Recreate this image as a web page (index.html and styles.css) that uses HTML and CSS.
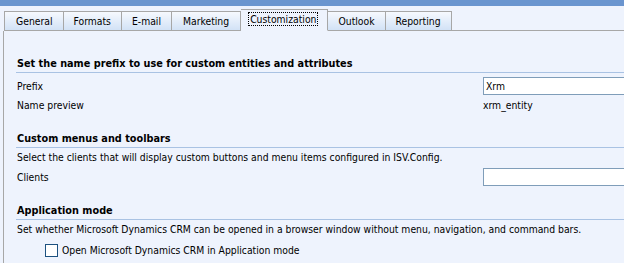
FILE: index.html
```html
<!DOCTYPE html>
<html>
<head>
<meta charset="utf-8">
<link rel="stylesheet" href="styles.css">
</head>
<body>
<div class="page">
<div class="topbar"></div>
<div class="tabs">
  <div class="tab first">General</div>
  <div class="tab">Formats</div>
  <div class="tab">E-mail</div>
  <div class="tab wide">Marketing</div>
  <div class="tab active"><span class="focus">Customization</span></div>
  <div class="tab">Outlook</div>
  <div class="tab">Reporting</div>
  <div class="tabfill"></div>
</div>
<div class="panel">
  <div class="section first">
    <div class="heading">Set the name prefix to use for custom entities and attributes</div>
    <div class="row">
      <div class="label">Prefix</div>
      <div class="field"><div class="input">Xrm</div></div>
    </div>
    <div class="row tight">
      <div class="label">Name preview</div>
      <div class="field value">xrm_entity</div>
    </div>
  </div>
  <div class="section">
    <div class="heading">Custom menus and toolbars</div>
    <div class="desc">Select the clients that will display custom buttons and menu items configured in ISV.Config.</div>
    <div class="row">
      <div class="label">Clients</div>
      <div class="field"><div class="input"></div></div>
    </div>
  </div>
  <div class="section">
    <div class="heading">Application mode</div>
    <div class="desc">Set whether Microsoft Dynamics CRM can be opened in a browser window without menu, navigation, and command bars.</div>
    <div class="check"><span class="box"></span>Open Microsoft Dynamics CRM in Application mode</div>
  </div>
</div>
</div>
</body>
</html>
```

FILE: styles.css
```css
html, body {
  margin: 0;
  padding: 0;
  background: #eef3fd;
  font-family: "DejaVu Sans Condensed", "DejaVu Sans", Tahoma, sans-serif;
  font-size: 10.3px;
  color: #000;
}
.page {
  display: flex;
  flex-direction: column;
  height: 263px;
  overflow: hidden;
}
.topbar {
  height: 6px;
  flex: none;
  background: #6a95cf;
}
.tabs {
  display: flex;
  flex: none;
  align-items: flex-end;
  padding-left: 4px;
  margin-top: 5px;
  height: 20px;
}
.tab {
  height: 18px;
  line-height: 18px;
  padding: 0 10px;
  border: 1px solid #a7a7a7;
  border-left: none;
  background: linear-gradient(#f6f9fe, #d2e2f6);
  white-space: nowrap;
}
.tab.first {
  border-left: 1px solid #a7a7a7;
  padding: 0 10px 0 11px;
}
.tab.wide {
  padding: 0 11px;
}
.tab.active {
  height: 20px;
  line-height: 19px;
  background: #eef3fd;
  border-bottom: 1px solid transparent;
  padding: 0 10px 0 8px;
}
.focus {
  outline: 1px dotted #000;
  padding: 0 1px;
}
.tabfill {
  flex: 1;
  border-bottom: 1px solid #a7a7a7;
  height: 20px;
}
.panel {
  flex: 1;
  min-height: 0;
  border-left: 1px solid #a7a7a7;
  margin-left: 3px;
  padding: 0 0 0 12px;
}
.section {
  margin-top: 18px;
}
.section.first {
  margin-top: 26px;
}
.heading {
  font-weight: bold;
  font-size: 10.8px;
  line-height: 14px;
  padding-left: 1px;
  padding-bottom: 1px;
  border-bottom: 1px solid #a9c2e3;
}
.row {
  display: flex;
  align-items: center;
  height: 18px;
  margin-top: 4px;
}
.row.tight {
  margin-top: 1px;
}
.label {
  width: 466px;
  padding-left: 1px;
}
.field {
  flex: 1;
}
.input {
  height: 16px;
  line-height: 16px;
  border: 1px solid #7f9db9;
  border-right: none;
  background: #fff;
  padding-left: 2px;
}
.desc {
  padding-left: 1px;
  line-height: 13px;
  margin-top: 3px;
}
.check {
  display: flex;
  align-items: center;
  margin-top: 8px;
  padding-left: 29px;
  line-height: 13px;
}
.box {
  width: 11px;
  height: 11px;
  border: 1px solid #1c5180;
  background: #fff;
  margin-right: 4px;
}
```
